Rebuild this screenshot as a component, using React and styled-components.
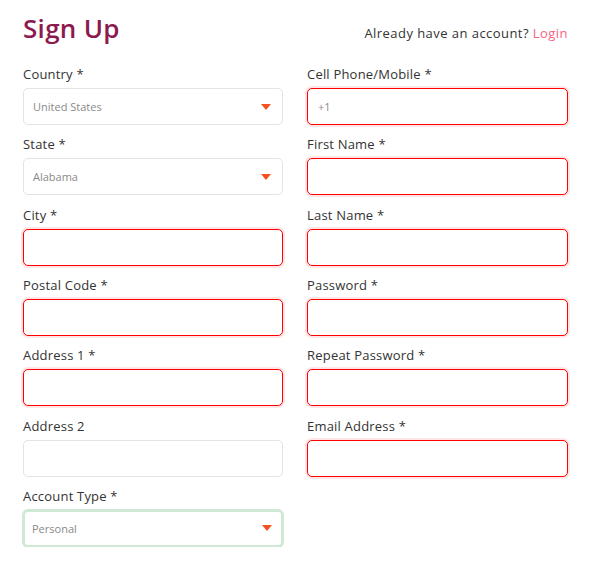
import React from "react";
import styled, { createGlobalStyle, css } from "styled-components";

const GlobalStyle = createGlobalStyle`
  html, body {
    margin: 0;
    padding: 0;
    background: #ffffff;
  }
  body {
    font-family: "Open Sans", "Noto Sans", sans-serif;
    color: #333333;
  }
  * { box-sizing: border-box; }
`;

const Page = styled.div`
  width: 590px;
  padding: 12px 22px 0 23px;
`;

const Header = styled.div`
  display: flex;
  justify-content: space-between;
  align-items: flex-start;
  height: 32px;
  margin-bottom: 21px;
`;

const Title = styled.h1`
  margin: 0;
  font-size: 26px;
  line-height: 32px;
  font-weight: 600;
  letter-spacing: 0.3px;
  color: #8c1a4f;
`;

const LoginText = styled.div`
  font-size: 13px;
  line-height: 18px;
  color: #333333;
  margin-top: 12px;
  letter-spacing: 0.45px;
  & a {
    color: #f7627f;
    text-decoration: none;
  }
`;

const Columns = styled.div`
  display: grid;
  grid-template-columns: 260px 261px;
  column-gap: 24px;
  align-items: start;
`;

const Column = styled.div`
  display: flex;
  flex-direction: column;
  gap: 10.33px;
`;

const Field = styled.div`
  display: flex;
  flex-direction: column;
`;

const Label = styled.label`
  font-size: 13px;
  line-height: 18px;
  margin-bottom: 5px;
  color: #333333;
  letter-spacing: 0.2px;
`;

const boxBase = css`
  width: 100%;
  height: 37px;
  border-radius: 5px;
  background: #ffffff;
  font-family: inherit;
  font-size: 11px;
  color: #8a8a8a;
  border: 1px solid #e3e3e3;
  ${(p) =>
    p.$state === "error" &&
    css`
      border: 1px solid #ff0000;
      box-shadow: 0 0 0 2px rgba(255, 0, 0, 0.1);
    `}
  ${(p) =>
    p.$state === "focus" &&
    css`
      border: 2px solid #d0e9d5;
      box-shadow: 0 0 0 1px #d0e9d5;
    `}
`;

const Input = styled.input`
  ${boxBase};
  padding: 0 10px;
  outline: none;
  &::placeholder {
    color: #8a8a8a;
  }
`;

const Select = styled.div`
  ${boxBase};
  display: flex;
  align-items: center;
  justify-content: space-between;
  padding: ${(p) => (p.$state === "focus" ? "0 9px 0 7px" : "0 11px 0 9px")};
  cursor: pointer;
`;

const Arrow = () => (
  <svg width="10" height="6" viewBox="0 0 10 6">
    <path d="M0 0 H10 L5 6 Z" fill="#f4511e" />
  </svg>
);

const SelectField = ({ label, value, state }) => (
  <Field>
    <Label>{label}</Label>
    <Select $state={state}>
      <span>{value}</span>
      <Arrow />
    </Select>
  </Field>
);

const InputField = ({ label, state, placeholder, type = "text" }) => (
  <Field>
    <Label>{label}</Label>
    <Input type={type} $state={state} placeholder={placeholder} />
  </Field>
);

export default function App() {
  return (
    <>
      <GlobalStyle />
      <Page>
        <Header>
          <Title>Sign Up</Title>
          <LoginText>
            Already have an account? <a href="#">Login</a>
          </LoginText>
        </Header>
        <Columns>
          <Column>
            <SelectField label="Country *" value="United States" />
            <SelectField label="State *" value="Alabama" />
            <InputField label="City *" state="error" />
            <InputField label="Postal Code *" state="error" />
            <InputField label="Address 1 *" state="error" />
            <InputField label="Address 2" />
            <SelectField label="Account Type *" value="Personal" state="focus" />
          </Column>
          <Column>
            <InputField label="Cell Phone/Mobile *" state="error" placeholder="+1" />
            <InputField label="First Name *" state="error" />
            <InputField label="Last Name *" state="error" />
            <InputField label="Password *" state="error" type="password" />
            <InputField label="Repeat Password *" state="error" type="password" />
            <InputField label="Email Address *" state="error" type="email" />
          </Column>
        </Columns>
      </Page>
    </>
  );
}
